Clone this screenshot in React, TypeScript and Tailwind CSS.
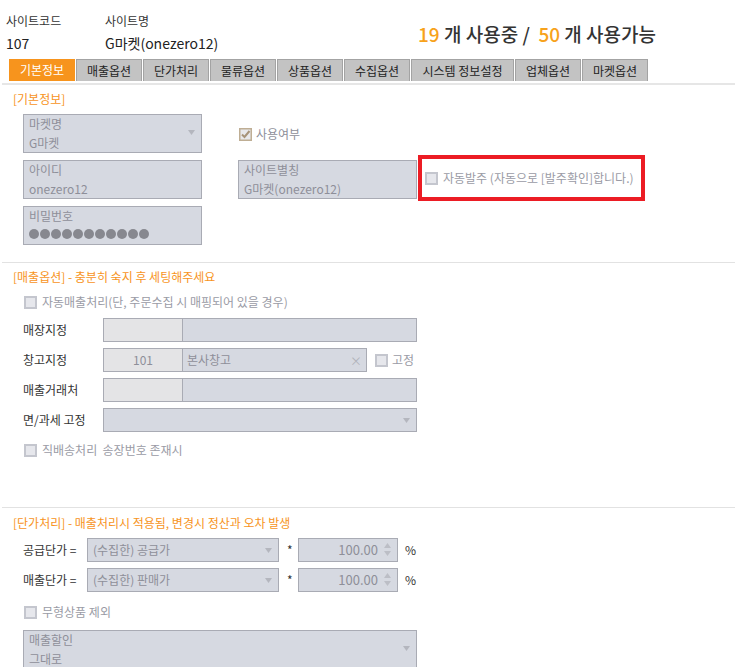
import React from "react";

const font = { fontFamily: '"Noto Sans CJK KR", "Noto Sans", sans-serif' };

function Check({ checked = false }: { checked?: boolean }) {
  if (checked) {
    return (
      <span className="inline-flex h-[13px] w-[13px] items-center justify-center bg-[#bfae94] border border-[#bfae94]">
        <svg width="11" height="11" viewBox="0 0 11 11">
          <rect x="0.5" y="0.5" width="10" height="10" fill="#e8e8ec" />
          <path d="M2 5.5 L4.5 8 L9.5 2" stroke="#a7937a" strokeWidth="2" fill="none" />
        </svg>
      </span>
    );
  }
  return <span className="inline-block h-[13px] w-[13px] border-2 border-[#c4c6ce] bg-[#e6e7ec]" />;
}

function Arrow() {
  return (
    <svg width="7" height="5" viewBox="0 0 7 5">
      <path d="M0 0 L7 0 L3.5 5 Z" fill="#b4b6be" />
    </svg>
  );
}

function Box({ label, value, arrow = false, dots = false, w = "w-[179px]" }: { label: string; value: string; arrow?: boolean; dots?: boolean; w?: string }) {
  return (
    <div className={`relative h-[39px] ${w} border border-[#a9abb4] bg-[#d6d9e1] px-[5px] text-[12px] leading-[18px] text-[#8e8f99]`}>
      <div>{label}</div>
      {dots ? (
        <div className="flex gap-[1px] pt-[4px]">
          {Array.from({ length: 11 }).map((_, i) => (
            <span key={i} className="inline-block h-[10px] w-[10px] rounded-full bg-[#87888f]" />
          ))}
        </div>
      ) : (
        <div className="pt-[1px]">{value}</div>
      )}
      {arrow && (
        <span className="absolute right-[6px] top-[15px] flex">
          <Arrow />
        </span>
      )}
    </div>
  );
}

const tabs = ["매출옵션", "단가처리", "물류옵션", "상품옵션", "수집옵션", "시스템 정보설정", "업체옵션", "마켓옵션"];
const tabW = ["w-[66px]", "w-[66px]", "w-[66px]", "w-[66px]", "w-[66px]", "w-[103px]", "w-[66px]", "w-[66px]"];

function Row({ label, children }: { label: string; children: React.ReactNode }) {
  return (
    <div className="flex h-[24px] items-center">
      <div className="w-[103px] shrink-0 whitespace-nowrap pl-[23px] text-[12px] text-[#333]">{label}</div>
      {children}
    </div>
  );
}

function SplitInput({ code = "", name = "", x = false, w = "w-[314px]" }: { code?: string; name?: string; x?: boolean; w?: string }) {
  return (
    <div className={`flex h-[24px] ${w} border border-[#a9abb4] text-[12px] text-[#8e8f99]`}>
      <div className="flex w-[79px] items-center justify-center border-r border-[#a9abb4] bg-[#e4e4e6]">{code}</div>
      <div className="relative flex flex-1 items-center bg-[#d6d9e1] pl-[4px]">
        {name}
        {x && <span className="absolute right-[4px] top-[3px] text-[12px] text-[#b0b2ba]">×</span>}
      </div>
    </div>
  );
}

function Spinner() {
  return (
    <span className="absolute right-[6px] top-[4px] flex flex-col gap-[3px]">
      <svg width="7" height="5" viewBox="0 0 7 5"><path d="M0 5 L7 5 L3.5 0 Z" fill="#bcbec6" /></svg>
      <svg width="7" height="5" viewBox="0 0 7 5"><path d="M0 0 L7 0 L3.5 5 Z" fill="#bcbec6" /></svg>
    </span>
  );
}

function PriceRow({ label, sel }: { label: string; sel: string }) {
  return (
    <div className="flex h-[24px] items-center">
      <div className="w-[87px] shrink-0 whitespace-nowrap pl-[23px] text-[12px] text-[#333]">{label}</div>
      <div className="relative flex h-[24px] w-[192px] items-center border border-[#a9abb4] bg-[#d6d9e1] pl-[5px] text-[12px] text-[#8e8f99]">
        {sel}
        <span className="absolute right-[6px] top-[9px] flex"><Arrow /></span>
      </div>
      <div className="w-[19px] pl-[8px] text-[12px] text-[#333]">*</div>
      <div className="relative flex h-[24px] w-[100px] items-center justify-end border border-[#a9abb4] bg-[#d6d9e1] pr-[19px] text-[13px] text-[#8e8f99]">
        100.00
        <Spinner />
      </div>
      <div className="pl-[7px] text-[12px] text-[#333]">%</div>
    </div>
  );
}

export default function App() {
  return (
    <div className="relative h-[667px] w-[737px] overflow-hidden bg-white" style={font}>
      {/* header */}
      <div className="flex h-[59px] items-start">
        <div className="w-[105px] pl-[6px] pt-[12px]">
          <div className="text-[12px] leading-[18px] text-[#333]">사이트코드</div>
          <div className="pt-[3px] text-[14px] leading-[20px] text-[#222]">107</div>
        </div>
        <div className="w-[313px] pt-[12px]">
          <div className="text-[12px] leading-[18px] text-[#333]">사이트명</div>
          <div className="pt-[3px] text-[14px] leading-[20px] text-[#222]">G마켓(onezero12)</div>
        </div>
        <div className="whitespace-nowrap pt-[21px] text-[19px] leading-[26px] font-medium text-[#333]">
          <span className="text-[#f7a21b]">19</span> 개 사용중 /&nbsp; <span className="text-[#f7a21b]">50</span> 개 사용가능
        </div>
      </div>

      {/* tabs */}
      <div className="flex h-[22px] gap-[1px] pl-[9px]">
        <div className="flex w-[66px] items-center justify-center bg-[#f7941d] text-[12px] text-white">기본정보</div>
        {tabs.map((t, i) => (
          <div key={t} className={`flex ${tabW[i]} items-center justify-center border border-b-0 border-[#a3a3a3] bg-[#c3c3c3] text-[12px] text-[#222]`}>
            {t}
          </div>
        ))}
      </div>
      <div className="mx-[2px] mt-[2px] h-[2px] bg-[#e6e6e6]" />

      {/* 기본정보 */}
      <div className="pl-[13px] pt-[6px] text-[12px] leading-[16px] text-[#f7941d]">[기본정보]</div>
      <div className="flex pl-[23px] pt-[7px]">
        <div className="flex flex-col gap-[7px]">
          <Box label="마켓명" value="G마켓" arrow />
          <Box label="아이디" value="onezero12" />
          <Box label="비밀번호" value="" dots />
        </div>
        <div className="flex flex-col pl-[36px]">
          <div className="flex h-[39px] items-center gap-[4px] pl-[1px] pt-[1px] text-[12px] text-[#8e8f99]">
            <Check checked /> 사용여부
          </div>
          <div className="mt-[7px] flex items-start">
            <Box label="사이트별칭" value="G마켓(onezero12)" />
            <div className="-mt-[5px] ml-[1px] flex h-[46px] w-[227px] items-center gap-[5px] border-[4px] border-[#ec1c24] pl-[3px] text-[12px] text-[#9a9ba5]">
              <Check /> 자동발주 (자동으로 [발주확인]합니다.)
            </div>
          </div>
        </div>
      </div>

      <div className="mx-[2px] mt-[17px] h-[1px] bg-[#e2e2e2]" />

      {/* 매출옵션 */}
      <div className="pl-[13px] pt-[6px] text-[12px] leading-[16px] text-[#f7941d]">[매출옵션] - 충분히 숙지 후 세팅해주세요</div>
      <div className="flex items-center gap-[5px] pl-[24px] pt-[9px] text-[12px] leading-[16px] text-[#9a9ba5]">
        <Check /> 자동매출처리(단, 주문수집 시 매핑되어 있을 경우)
      </div>
      <div className="flex flex-col gap-[6px] pt-[8px]">
        <Row label="매장지정"><SplitInput /></Row>
        <Row label="창고지정">
          <SplitInput code="101" name="본사창고" x w="w-[264px]" />
          <div className="flex items-center gap-[4px] pl-[8px] text-[12px] text-[#9a9ba5]"><Check /> 고정</div>
        </Row>
        <Row label="매출거래처"><SplitInput /></Row>
        <Row label="면/과세 고정">
          <div className="relative h-[24px] w-[314px] border border-[#a9abb4] bg-[#d6d9e1]">
            <span className="absolute right-[6px] top-[9px] flex"><Arrow /></span>
          </div>
        </Row>
      </div>
      <div className="flex items-center gap-[5px] pl-[24px] pt-[10px] text-[12px] leading-[16px] text-[#9a9ba5]">
        <Check /> 직배송처리&nbsp; 송장번호 존재시
      </div>

      <div className="mx-[2px] mt-[49px] h-[1px] bg-[#e2e2e2]" />

      {/* 단가처리 */}
      <div className="pl-[13px] pt-[7px] text-[12px] leading-[16px] text-[#f7941d]">[단가처리] - 매출처리시 적용됨, 변경시 정산과 오차 발생</div>
      <div className="flex flex-col gap-[6px] pt-[7px]">
        <PriceRow label="공급단가 =" sel="(수집한) 공급가" />
        <PriceRow label="매출단가 =" sel="(수집한) 판매가" />
      </div>
      <div className="flex items-center gap-[5px] pl-[24px] pt-[12px] text-[12px] leading-[16px] text-[#9a9ba5]">
        <Check /> 무형상품 제외
      </div>
      <div className="pl-[23px] pt-[10px]">
        <Box label="매출할인" value="그대로" arrow w="w-[394px]" />
      </div>
    </div>
  );
}
